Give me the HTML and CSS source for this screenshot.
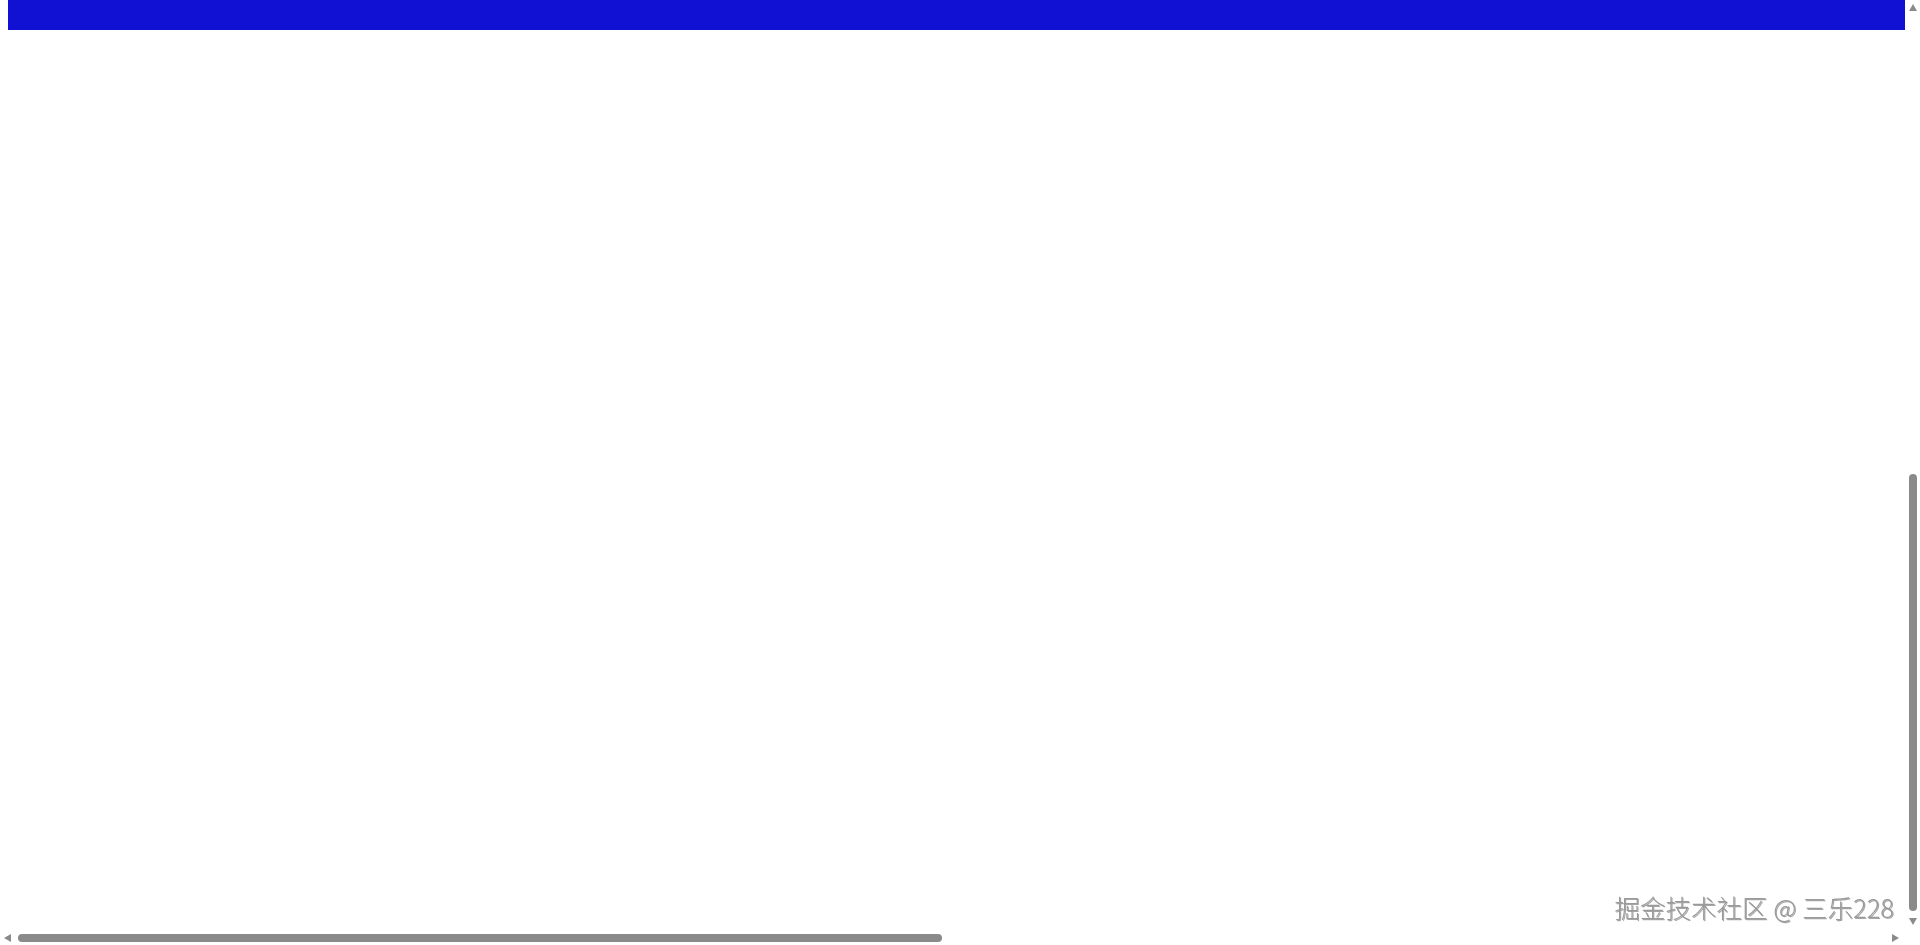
FILE: index.html
```html
<!DOCTYPE html>
<html lang="zh">
<head>
<meta charset="utf-8">
<title>Page</title>
<link rel="stylesheet" href="styles.css">
</head>
<body>
<div class="page">
  <header class="topbar"></header>
</div>
<div class="watermark">掘金技术社区 @ 三乐228</div>
<div class="vscroll">
  <span class="arrow arrow-up"></span>
  <span class="spacer"></span>
  <span class="vthumb"></span>
  <span class="arrow arrow-down"></span>
</div>
<div class="hscroll">
  <span class="arrow arrow-left"></span>
  <span class="hthumb"></span>
  <span class="spacer"></span>
  <span class="arrow arrow-right"></span>
</div>
</body>
</html>
```
FILE: styles.css
```css
html, body {
  margin: 0;
  padding: 0;
  width: 1920px;
  height: 945px;
  overflow: hidden;
  background: #ffffff;
  font-family: "Noto Sans CJK SC", "Noto Sans", sans-serif;
}

.page {
  width: 1905px;
  height: 930px;
}

.topbar {
  margin-left: 8px;
  width: 1897px;
  height: 30px;
  background: #1111d4;
}

.watermark {
  position: fixed;
  right: 26px;
  bottom: 24px;
  font-size: 25.5px;
  font-weight: 300;
  line-height: 1.1;
  color: #9a9a9a;
  text-shadow: 1px 1px 0 rgba(0, 0, 0, 0.35), -1px -1px 0 rgba(255, 255, 255, 0.9);
  white-space: nowrap;
}

.vscroll {
  position: fixed;
  top: 0;
  right: 0;
  width: 15px;
  height: 930px;
  box-sizing: border-box;
  padding: 4px 0 5px 0;
  display: flex;
  flex-direction: column;
  align-items: center;
  background: #ffffff;
}

.hscroll {
  position: fixed;
  left: 0;
  bottom: 0;
  width: 1905px;
  height: 15px;
  box-sizing: border-box;
  padding: 0 6px 0 4px;
  display: flex;
  align-items: center;
  background: #ffffff;
}

.spacer {
  flex: 1;
}

.arrow {
  width: 0;
  height: 0;
  flex: none;
}

.arrow-up {
  border-left: 4.5px solid transparent;
  border-right: 4.5px solid transparent;
  border-bottom: 7px solid #8a8a8a;
}

.arrow-down {
  margin-top: 7px;
  border-left: 4.5px solid transparent;
  border-right: 4.5px solid transparent;
  border-top: 7px solid #8a8a8a;
}

.arrow-left {
  border-top: 4.5px solid transparent;
  border-bottom: 4.5px solid transparent;
  border-right: 7px solid #8a8a8a;
}

.arrow-right {
  border-top: 4.5px solid transparent;
  border-bottom: 4.5px solid transparent;
  border-left: 7px solid #8a8a8a;
}

.vthumb {
  width: 8px;
  height: 437px;
  border-radius: 4px;
  background: #8a8a8a;
  flex: none;
}

.hthumb {
  margin-left: 7px;
  width: 924px;
  height: 8px;
  border-radius: 4px;
  background: #8a8a8a;
  flex: none;
}
```
